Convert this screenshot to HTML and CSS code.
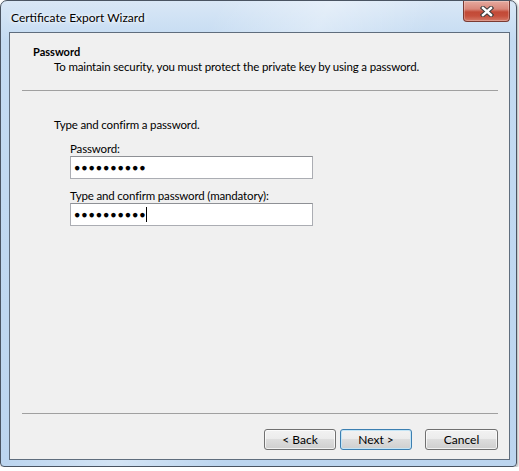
FILE: index.html
```html
<!DOCTYPE html>
<html lang="en">

<head>
    <meta charset="UTF-8">
    <title>Certificate Export Wizard</title>
    <link rel="stylesheet" href="styles.css">
</head>

<body>
    <div class="window">
        <div class="titlebar">
            <div class="title">Certificate Export Wizard</div>
            <div class="close">
                <svg width="14" height="11" viewBox="0 0 14 11">
                    <path d="M3 2 L11 9 M11 2 L3 9" stroke="#3a3a3a" stroke-width="4.4" stroke-linecap="square" />
                    <path d="M3 2 L11 9 M11 2 L3 9" stroke="#ffffff" stroke-width="2.4" stroke-linecap="square" />
                </svg>
            </div>
        </div>

        <div class="client">
            <div class="header">
                <div class="page-title">Password</div>
                <div class="page-desc">To maintain security, you must protect the private key by using a password.</div>
            </div>
            <div class="separator"></div>

            <div class="content">
                <div class="intro">Type and confirm a password.</div>
                <div class="field">
                    <label>Password:</label>
                    <div class="textbox"><span class="dots">●●●●●●●●●●</span></div>
                </div>
                <div class="field">
                    <label>Type and confirm password (mandatory):</label>
                    <div class="textbox"><span class="dots">●●●●●●●●●●</span><span class="caret"></span></div>
                </div>
            </div>

            <div class="separator"></div>
            <div class="footer">
                <button class="btn">&lt; Back</button>
                <button class="btn default">Next &gt;</button>
                <button class="btn cancel">Cancel</button>
            </div>
        </div>
    </div>
</body>

</html>
```

FILE: styles.css
```css
body {
    margin: 0;
    background: #ffffff;
    font-family: Lato, "Noto Sans", sans-serif;
    font-size: 11.5px;
    letter-spacing: -0.15px;
    color: #000;
}

.window {
    width: 517px;
    height: 467px;
    box-sizing: border-box;
    border: 1px solid #4a5462;
    border-radius: 7px 7px 4px 4px;
    padding: 0 6px 6px 8px;
    display: flex;
    flex-direction: column;
    background:
        linear-gradient(115deg, rgba(255, 255, 255, 0) 30%, rgba(255, 255, 255, 0.35) 45%, rgba(255, 255, 255, 0) 60%),
        linear-gradient(to bottom, #d9e7f6 0%, #c4dbf2 40px, #bcd5ef 100%);
    box-shadow: 1px 1px 3px rgba(0, 0, 0, 0.35);
}

.titlebar {
    height: 31px;
    display: flex;
    justify-content: space-between;
    align-items: flex-start;
}

.title {
    margin: 9px 0 0 2px;
    line-height: 16px;
    font-size: 12px;
    letter-spacing: 0;
    text-shadow: 0 0 6px #ffffff, 0 0 3px #ffffff;
}

.close {
    width: 45px;
    height: 20px;
    border: 1px solid #7a3a32;
    border-top: none;
    border-radius: 0 0 4px 4px;
    display: flex;
    align-items: center;
    justify-content: center;
    background: linear-gradient(to bottom, #e6aa9f 0%, #d9877a 40%, #c24a37 55%, #c6503d 75%, #d47a68 100%);
    box-shadow: inset 0 0 0 1px rgba(255, 255, 255, 0.25);
}

.client {
    flex: 1;
    border: 1px solid #5f6d7d;
    background: #f0f0f0;
    display: flex;
    flex-direction: column;
}

.header {
    padding: 11px 0 0 23px;
    line-height: 15px;
}

.page-title {
    font-weight: bold;
    font-size: 11px;
    letter-spacing: 0;
}

.page-desc {
    padding-left: 21px;
}

.separator {
    height: 1px;
    margin: 0 11px 0 12px;
    background: #a0a0a0;
}

.header + .separator {
    margin-top: 16px;
}

.content {
    flex: 1;
    padding: 26px 0 0 44px;
    line-height: 15px;
}

.field {
    margin-left: 16px;
}

.intro {
    margin-bottom: 9px;
}

.field label {
    display: block;
}

.field + .field {
    margin-top: 9px;
}

.textbox {
    width: 243px;
    height: 23px;
    box-sizing: border-box;
    border: 1px solid #abadb3;
    border-top-color: #8e9095;
    background: #fff;
    display: flex;
    align-items: center;
    padding-left: 3px;
}

.dots {
    font-family: "Liberation Sans", sans-serif;
    font-size: 10.5px;
    letter-spacing: 0.9px;
}

.caret {
    width: 1px;
    height: 15px;
    background: #000;
}

.footer {
    display: flex;
    justify-content: flex-end;
    padding: 15px 11px 9px 0;
}

.btn {
    width: 72px;
    height: 21px;
    margin-left: 4px;
    font-family: Lato, "Noto Sans", sans-serif;
    font-size: 12px;
    color: #000;
    border: 1px solid #707070;
    border-radius: 3px;
    background: linear-gradient(to bottom, #f2f2f2 0%, #ebebeb 50%, #dddddd 50%, #cfcfcf 100%);
    box-shadow: inset 0 0 0 1px rgba(255, 255, 255, 0.7);
    padding: 0;
}

.btn.default {
    border-color: #3c7fb1;
    box-shadow: inset 0 0 0 1px #c4e5f6;
}

.btn.cancel {
    width: 73px;
    margin-left: 13px;
}
```
